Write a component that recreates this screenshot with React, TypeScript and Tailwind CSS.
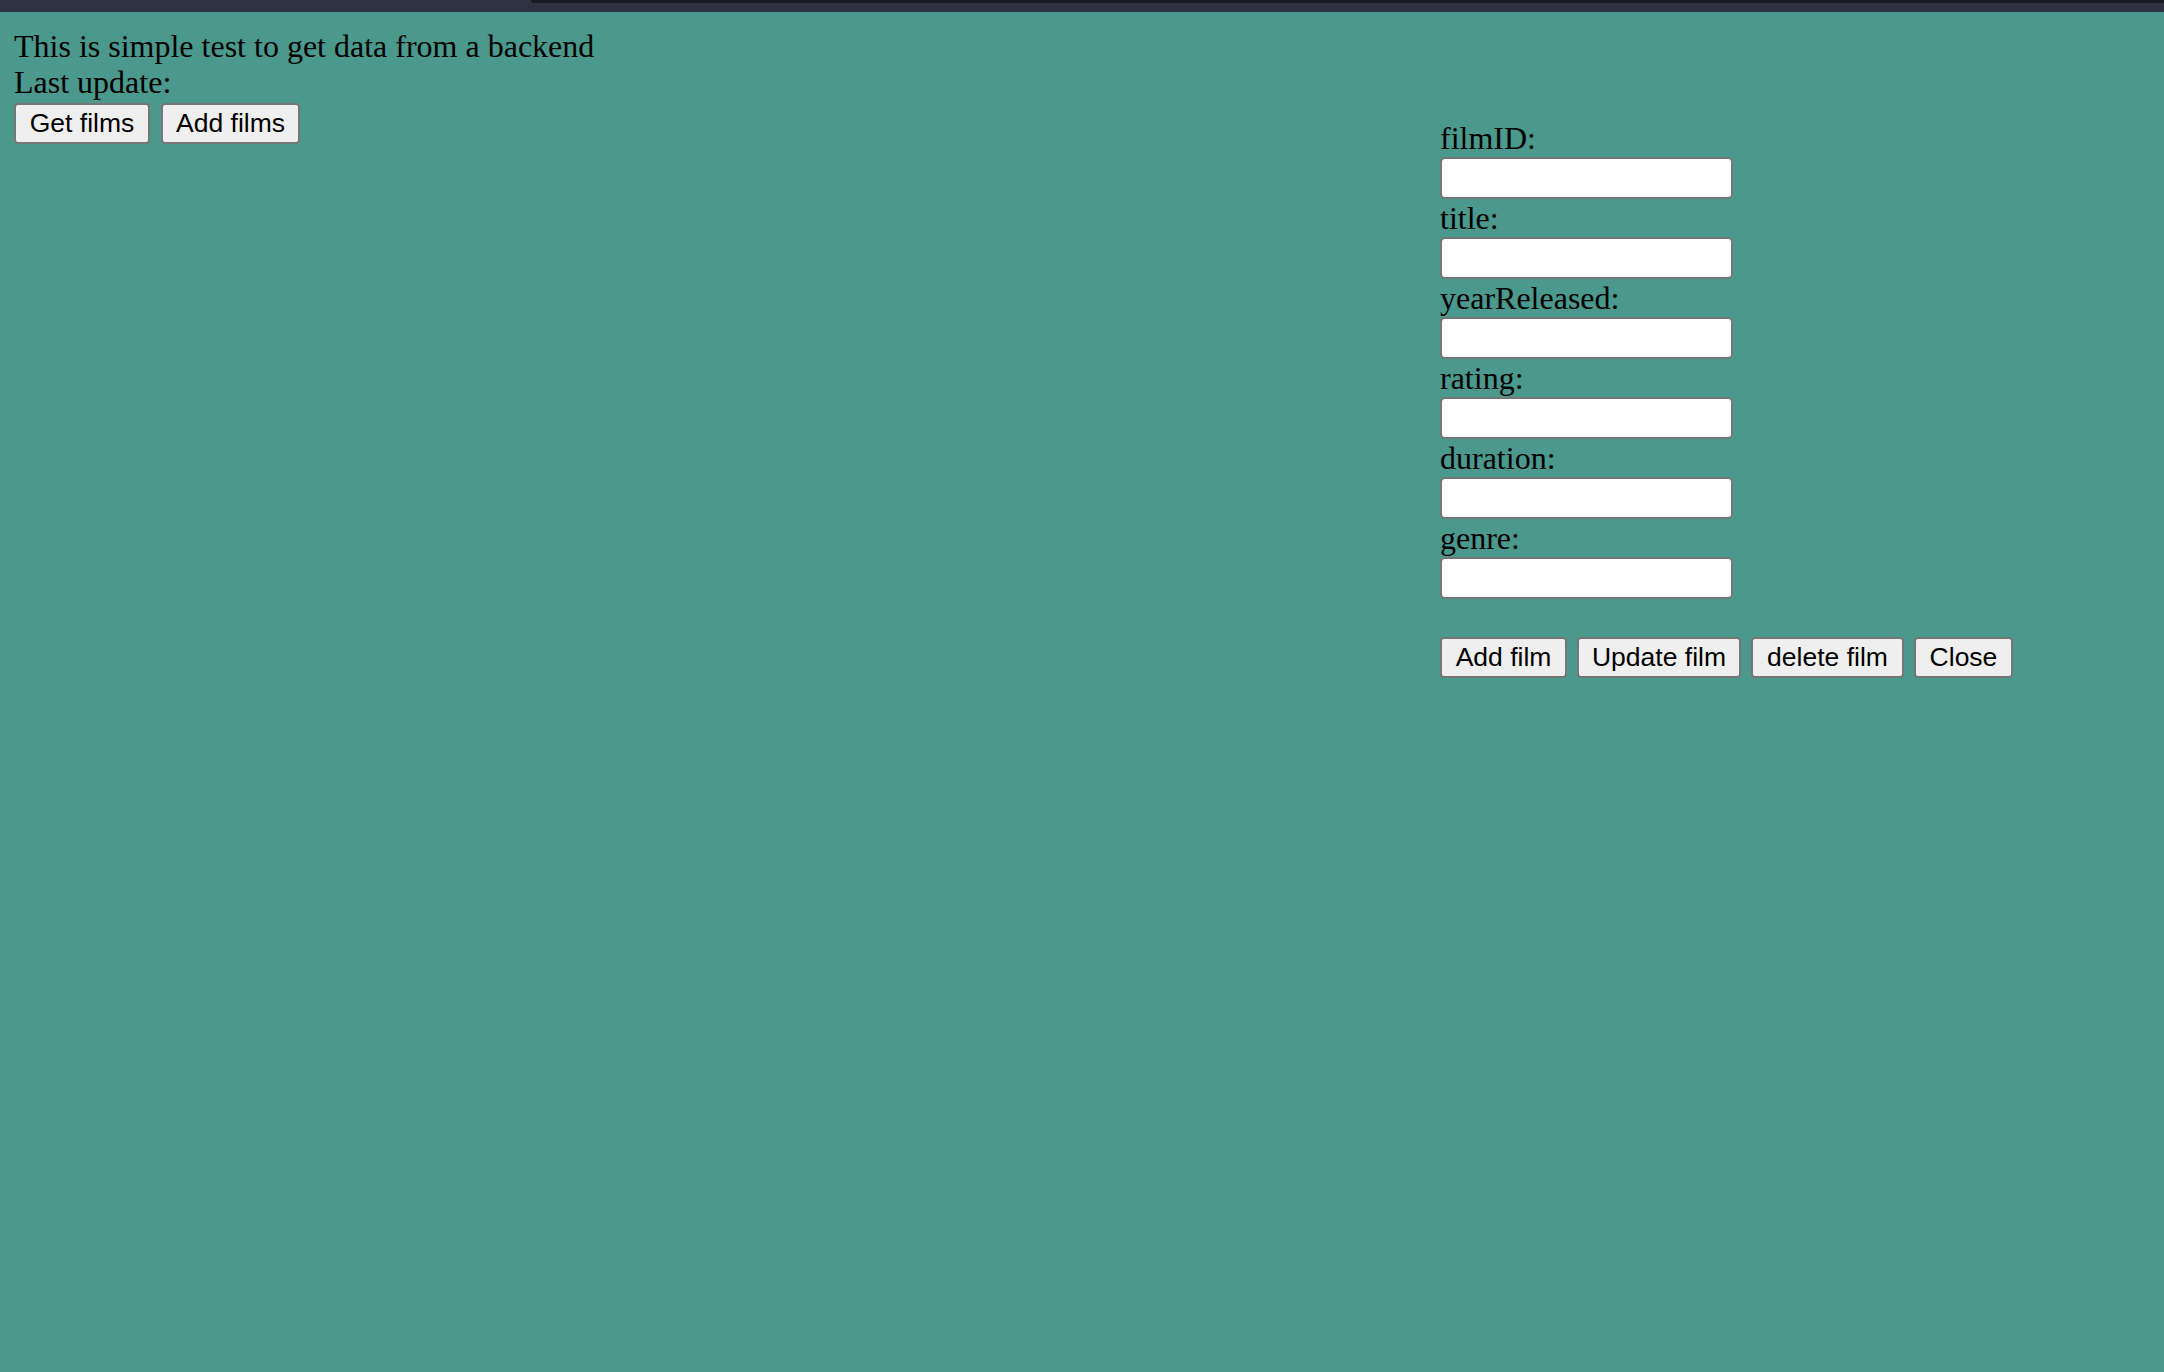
import React from "react";

const serif = { fontFamily: '"Liberation Serif", "Times New Roman", serif' };

function Btn({ label, w }: { label: string; w: string }) {
  return (
    <button
      type="button"
      className={`${w} h-[41px] shrink-0 rounded-[4px] border-2 border-[#767676] bg-[#efefef] text-[26.5px] leading-none text-black flex items-center justify-center`}
      style={{ fontFamily: '"Liberation Sans", Arial, sans-serif' }}
    >
      {label}
    </button>
  );
}

const fields = ["filmID:", "title:", "yearReleased:", "rating:", "duration:", "genre:"];

export default function App() {
  return (
    <div className="min-h-screen w-full bg-[#4b988c] text-black" style={serif}>
      <div className="h-[12px] w-full bg-[#2e3241] flex">
        <div className="w-[531px] shrink-0" />
        <div className="h-[3px] flex-1 rounded-bl-[3px] bg-[#1b1c22]" />
      </div>
      <div className="flex">
        <div className="w-[1440px] shrink-0 pl-[14px] pt-[16px]">
          <div className="text-[32px] leading-[36px]">This is simple test to get data from a backend</div>
          <div className="text-[32px] leading-[36px]">Last update:</div>
          <div className="mt-[3px] flex gap-[11px]">
            <Btn label="Get films" w="w-[136px]" />
            <Btn label="Add films" w="w-[139px]" />
          </div>
        </div>
        <div className="pt-[107px]">
          {fields.map((f) => (
            <div key={f}>
              <div className="h-[38px] text-[32px] leading-[38px]">{f}</div>
              <input
                type="text"
                className="block h-[42px] w-[293px] rounded-[5px] border-2 border-[#767676] bg-white outline-none"
              />
            </div>
          ))}
          <div className="mt-[38px] flex gap-[10px]">
            <Btn label="Add film" w="w-[127px]" />
            <Btn label="Update film" w="w-[164px]" />
            <Btn label="delete film" w="w-[153px]" />
            <Btn label="Close" w="w-[99px]" />
          </div>
        </div>
      </div>
    </div>
  );
}
